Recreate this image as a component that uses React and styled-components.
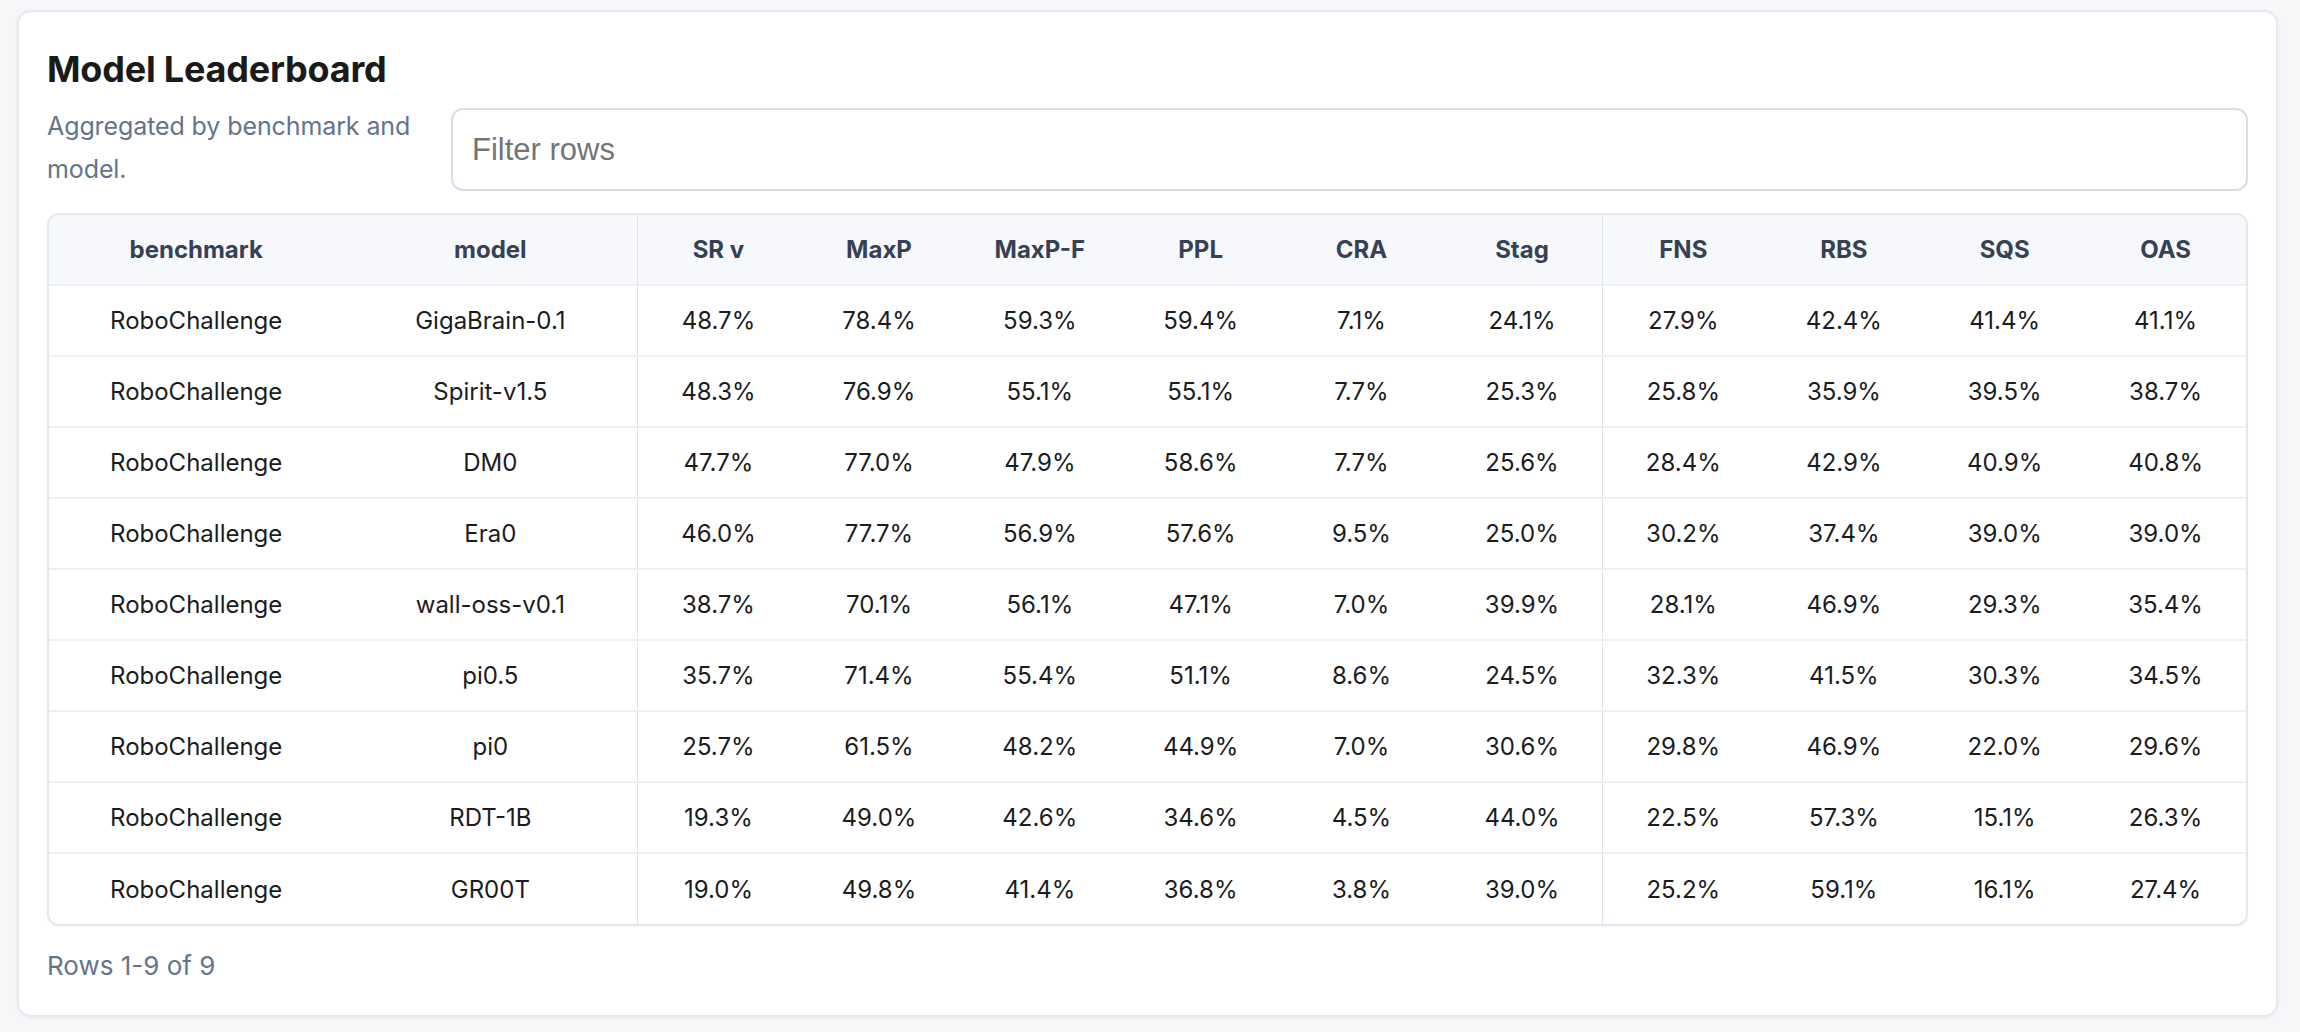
import React from "react";
import styled, { createGlobalStyle } from "styled-components";

const GlobalStyle = createGlobalStyle`
  html, body {
    margin: 0;
    padding: 0;
    background: #f6f7f8;
  }
  body {
    font-family: Inter, "Noto Sans", "Liberation Sans", sans-serif;
    color: #1b1c1e;
  }
  * { box-sizing: border-box; }
`;

const Page = styled.div`
  padding: 10px 22px 17px 17px;
`;

const Card = styled.section`
  background: #ffffff;
  border: 2px solid #e6e9f0;
  border-radius: 14px;
  box-shadow: 0 1px 4px rgba(20, 30, 60, 0.05);
  padding: 36px 28px 28px 28px;
`;

const Title = styled.h2`
  margin: 0;
  font-family: Inter, sans-serif;
  font-size: 36px;
  line-height: 1.2;
  font-weight: 700;
  color: #1a1a1a;
  letter-spacing: -0.2px;
`;

const Toolbar = styled.div`
  display: flex;
  align-items: flex-end;
  gap: 20px;
  margin-top: 14px;
`;

const Subtitle = styled.p`
  flex: 0 0 384px;
  margin: 0;
  font-size: 25px;
  line-height: 43px;
  letter-spacing: -0.1px;
  color: #64748b;
`;

const FilterInput = styled.input`
  flex: 1 1 auto;
  height: 83px;
  border: 2px solid #d8dde8;
  border-radius: 12px;
  padding: 0 19px;
  font-family: "Liberation Sans", Arial, sans-serif;
  font-size: 31px;
  color: #1b1c1e;
  background: #fff;
  outline: none;
  &::placeholder {
    color: #757575;
  }
`;

const TableWrap = styled.div`
  margin-top: 22px;
  border: 2px solid #e3e7ef;
  border-radius: 12px;
  overflow: hidden;
  box-shadow: 0 1px 2px rgba(20, 30, 60, 0.06);
`;

const Table = styled.table`
  width: 100%;
  border-collapse: collapse;
  table-layout: fixed;
`;

const HeadCell = styled.th`
  height: 70px;
  padding: 0 8px;
  background: #f7f8fc;
  border-bottom: 2px solid #eceff5;
  border-right: ${(p) => (p.$divider ? "1px solid #dfe3ec" : "none")};
  font-size: 24px;
  font-weight: 700;
  color: #354154;
  text-align: center;
  white-space: nowrap;
`;

const Row = styled.tr`
  & + & > td {
    border-top: 2px solid #eef0f5;
  }
`;

const Cell = styled.td`
  height: 71px;
  padding: 0 8px;
  border-right: ${(p) => (p.$divider ? "1px solid #dfe3ec" : "none")};
  font-size: 24px;
  font-weight: 400;
  color: #1b1c1e;
  text-align: center;
  white-space: nowrap;
`;

const Footer = styled.div`
  margin-top: 18px;
  font-size: 26px;
  line-height: 43px;
  color: #64748b;
`;

const columns = [
  "benchmark",
  "model",
  "SR v",
  "MaxP",
  "MaxP-F",
  "PPL",
  "CRA",
  "Stag",
  "FNS",
  "RBS",
  "SQS",
  "OAS",
];

const dividerAfter = new Set([1, 7]);

const rows = [
  ["RoboChallenge", "GigaBrain-0.1", "48.7%", "78.4%", "59.3%", "59.4%", "7.1%", "24.1%", "27.9%", "42.4%", "41.4%", "41.1%"],
  ["RoboChallenge", "Spirit-v1.5", "48.3%", "76.9%", "55.1%", "55.1%", "7.7%", "25.3%", "25.8%", "35.9%", "39.5%", "38.7%"],
  ["RoboChallenge", "DM0", "47.7%", "77.0%", "47.9%", "58.6%", "7.7%", "25.6%", "28.4%", "42.9%", "40.9%", "40.8%"],
  ["RoboChallenge", "Era0", "46.0%", "77.7%", "56.9%", "57.6%", "9.5%", "25.0%", "30.2%", "37.4%", "39.0%", "39.0%"],
  ["RoboChallenge", "wall-oss-v0.1", "38.7%", "70.1%", "56.1%", "47.1%", "7.0%", "39.9%", "28.1%", "46.9%", "29.3%", "35.4%"],
  ["RoboChallenge", "pi0.5", "35.7%", "71.4%", "55.4%", "51.1%", "8.6%", "24.5%", "32.3%", "41.5%", "30.3%", "34.5%"],
  ["RoboChallenge", "pi0", "25.7%", "61.5%", "48.2%", "44.9%", "7.0%", "30.6%", "29.8%", "46.9%", "22.0%", "29.6%"],
  ["RoboChallenge", "RDT-1B", "19.3%", "49.0%", "42.6%", "34.6%", "4.5%", "44.0%", "22.5%", "57.3%", "15.1%", "26.3%"],
  ["RoboChallenge", "GR00T", "19.0%", "49.8%", "41.4%", "36.8%", "3.8%", "39.0%", "25.2%", "59.1%", "16.1%", "27.4%"],
];

export default function App() {
  return (
    <>
      <GlobalStyle />
      <Page>
        <Card>
          <Title>Model Leaderboard</Title>
          <Toolbar>
            <Subtitle>Aggregated by benchmark and model.</Subtitle>
            <FilterInput type="text" placeholder="Filter rows" />
          </Toolbar>
          <TableWrap>
            <Table>
              <colgroup>
                {columns.map((c, i) => (
                  <col key={c} style={{ width: i < 2 ? "13.4%" : "7.32%" }} />
                ))}
              </colgroup>
              <thead>
                <tr>
                  {columns.map((c, i) => (
                    <HeadCell key={c} $divider={dividerAfter.has(i)}>
                      {c}
                    </HeadCell>
                  ))}
                </tr>
              </thead>
              <tbody>
                {rows.map((r) => (
                  <Row key={r[1]}>
                    {r.map((v, i) => (
                      <Cell key={i} $divider={dividerAfter.has(i)}>
                        {v}
                      </Cell>
                    ))}
                  </Row>
                ))}
              </tbody>
            </Table>
          </TableWrap>
          <Footer>Rows 1-9 of 9</Footer>
        </Card>
      </Page>
    </>
  );
}
